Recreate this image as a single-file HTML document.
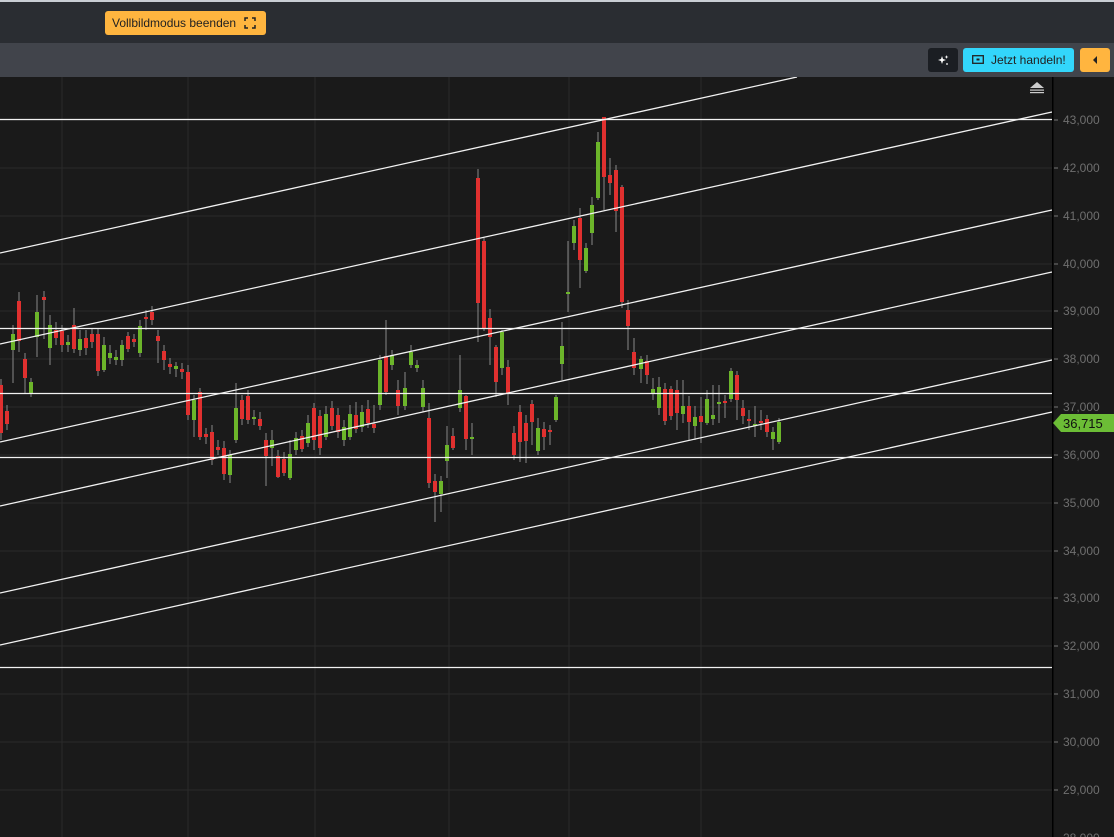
<!DOCTYPE html>
<html><head><meta charset="utf-8"><style>
html,body{margin:0;padding:0;background:#1a1a1a;width:1114px;height:837px;overflow:hidden;font-family:"Liberation Sans",sans-serif}
.top{position:absolute;left:0;top:0;width:1114px;height:43px;background:#2a2d32;border-top:2px solid #c9ced4;box-sizing:border-box}
.bar2{position:absolute;left:0;top:43px;width:1114px;height:34px;background:#41444b}
.btn{position:absolute;border-radius:3px;box-sizing:border-box;font-size:12px;color:#222;line-height:24px}
svg{position:absolute;left:0;top:77px}
.r{fill:#e0302f}.g{fill:#6cb52a}
</style></head><body>
<div class="top"></div>
<div class="btn" style="left:105px;top:11px;width:161px;height:24px;background:#ffb53f;padding:0 0 0 7px">Vollbildmodus beenden
<svg style="position:absolute;left:139px;top:6px" width="12" height="12" viewBox="0 0 12 12"><path d="M1 4V1H4M8 1H11V4M11 8V11H8M4 11H1V8" fill="none" stroke="#222" stroke-width="1.5"/></svg></div>
<div class="bar2"></div>
<div class="btn" style="left:928px;top:48px;width:30px;height:24px;background:#1b1e23">
<svg style="position:absolute;left:9px;top:6px" width="12" height="12" viewBox="0 0 12 12"><path d="M5 2L6 5L9 6L6 7L5 10L4 7L1 6L4 5Z" fill="#fff"/><path d="M9.5 1L10 2.5L11.5 3L10 3.5L9.5 5L9 3.5L7.5 3L9 2.5Z" fill="#fff"/><circle cx="10" cy="10" r="0.9" fill="#fff"/></svg></div>
<div class="btn" style="left:963px;top:48px;width:111px;height:24px;background:#33d6fb;padding:0 0 0 28px">Jetzt handeln!
<svg style="position:absolute;left:9px;top:7px" width="12" height="9" viewBox="0 0 12 9"><rect x="0.7" y="0.7" width="10.6" height="7.6" fill="none" stroke="#222" stroke-width="1.3"/><rect x="4.5" y="3.5" width="3" height="2" fill="#222"/></svg></div>
<div class="btn" style="left:1080px;top:48px;width:30px;height:24px;background:#ffb53f"><div style="position:absolute;left:13px;top:8px;width:0;height:0;border-top:4px solid transparent;border-bottom:4px solid transparent;border-right:4px solid #222"></div></div>

<svg width="1114" height="760" viewBox="0 77 1114 760">
<g stroke="#2a2a2a" stroke-width="1">
<path d="M62 77V837M188 77V837M315 77V837M449 77V837M569 77V837M701 77V837"/>
<path d="M0 120H1052M0 168H1052M0 216H1052M0 264H1052M0 311H1052M0 359H1052M0 407H1052M0 455H1052M0 503H1052M0 551H1052M0 598H1052M0 646H1052M0 694H1052M0 742H1052M0 790H1052"/>
</g>
<g stroke="#888" stroke-width="1" fill="none">
<path d="M1 379V440M7 405V430M13 325V383M19 292V352M25 353V393M31 378V397M37 295V357M44 291V339M50 315V365M56 322V345M62 325V352M68 335V352M74 308V353M80 330V356M86 330V355M92 328V348M98 328V376M104 337V372M110 345V364M116 350V365M122 340V366M128 332V352M134 334V347M140 320V357M146 310V330M152 306V325M158 330V363M164 345V370M170 358V374M176 362V377M182 363V379M188 365V420M194 395V437M200 388V440M206 428V444M212 425V465M218 440V455M224 441V480M230 450V483M236 383V443M242 395V425M248 390V424M254 410V425M260 412V430M266 433V486M272 430V466M278 450V478M284 452V476M290 440V480M296 432V455M302 430V452M308 415V447M314 403V450M320 410V455M326 406V440M332 401V430M338 408V438M344 420V446M350 405V440M356 402V433M362 405V432M368 400V428M374 405V433M380 355V410M386 320V395M392 350V370M398 380V415M405 372V410M411 345V368M417 360V372M423 380V412M429 403V488M435 474V522M441 476V512M447 426V478M453 428V450M460 355V412M466 395V450M472 423V455M478 169V342M484 238V331M490 309V365M496 345V397M502 330V375M508 360V405M514 426V460M520 405V462M526 415V463M532 400V445M538 418V455M544 422V450M550 425V445M556 395V422M562 322V380M568 241V312M574 220V250M580 208V288M586 243V273M592 197V245M598 132V200M604 117V210M610 158V195M616 165V232M622 185V308M628 300V350M634 338V375M641 356V383M647 355V384M653 378V400M659 377V415M665 383V425M671 386V420M677 380V430M683 380V423M689 396V440M695 406V440M701 397V443M707 390V425M713 385V425M719 385V423M725 395V418M731 368V402M737 371V420M743 400V424M749 410V430M755 406V437M761 410V430M767 415V437M773 427V450M779 418V444"/>
</g>
<g>
<rect class="r" x="-1" y="385" width="4" height="48"/><rect class="r" x="5" y="411" width="4" height="13"/><rect class="g" x="11" y="334" width="4" height="16"/><rect class="r" x="17" y="301" width="4" height="40"/><rect class="r" x="23" y="359" width="4" height="19"/><rect class="g" x="29" y="382" width="4" height="11"/><rect class="g" x="35" y="312" width="4" height="25"/><rect class="r" x="42" y="297" width="4" height="3"/><rect class="g" x="48" y="325" width="4" height="23"/><rect class="r" x="54" y="330" width="4" height="8"/><rect class="r" x="60" y="331" width="4" height="14"/><rect class="g" x="66" y="342" width="4" height="3"/><rect class="r" x="72" y="325" width="4" height="24"/><rect class="g" x="78" y="339" width="4" height="11"/><rect class="r" x="84" y="338" width="4" height="10"/><rect class="r" x="90" y="334" width="4" height="8"/><rect class="r" x="96" y="334" width="4" height="37"/><rect class="g" x="102" y="345" width="4" height="25"/><rect class="g" x="108" y="353" width="4" height="5"/><rect class="g" x="114" y="357" width="4" height="3"/><rect class="g" x="120" y="345" width="4" height="15"/><rect class="r" x="126" y="336" width="4" height="13"/><rect class="r" x="132" y="339" width="4" height="3"/><rect class="g" x="138" y="326" width="4" height="27"/><rect class="r" x="144" y="317" width="4" height="2"/><rect class="r" x="150" y="312" width="4" height="8"/><rect class="r" x="156" y="336" width="4" height="5"/><rect class="r" x="162" y="351" width="4" height="9"/><rect class="r" x="168" y="364" width="4" height="3"/><rect class="g" x="174" y="366" width="4" height="3"/><rect class="r" x="180" y="369" width="4" height="3"/><rect class="r" x="186" y="372" width="4" height="43"/><rect class="g" x="192" y="400" width="4" height="20"/><rect class="r" x="198" y="392" width="4" height="45"/><rect class="r" x="204" y="434" width="4" height="3"/><rect class="r" x="210" y="432" width="4" height="28"/><rect class="r" x="216" y="447" width="4" height="3"/><rect class="r" x="222" y="448" width="4" height="26"/><rect class="g" x="228" y="455" width="4" height="20"/><rect class="g" x="234" y="408" width="4" height="32"/><rect class="r" x="240" y="400" width="4" height="19"/><rect class="r" x="246" y="396" width="4" height="24"/><rect class="g" x="252" y="417" width="4" height="2"/><rect class="r" x="258" y="419" width="4" height="7"/><rect class="r" x="264" y="440" width="4" height="16"/><rect class="g" x="270" y="440" width="4" height="8"/><rect class="r" x="276" y="456" width="4" height="21"/><rect class="r" x="282" y="459" width="4" height="14"/><rect class="g" x="288" y="454" width="4" height="24"/><rect class="g" x="294" y="438" width="4" height="12"/><rect class="r" x="300" y="436" width="4" height="13"/><rect class="g" x="306" y="423" width="4" height="20"/><rect class="r" x="312" y="408" width="4" height="32"/><rect class="r" x="318" y="416" width="4" height="32"/><rect class="g" x="324" y="414" width="4" height="23"/><rect class="r" x="330" y="408" width="4" height="18"/><rect class="r" x="336" y="415" width="4" height="17"/><rect class="g" x="342" y="427" width="4" height="13"/><rect class="g" x="348" y="414" width="4" height="23"/><rect class="r" x="354" y="415" width="4" height="14"/><rect class="g" x="360" y="412" width="4" height="15"/><rect class="r" x="366" y="409" width="4" height="14"/><rect class="r" x="372" y="424" width="4" height="4"/><rect class="g" x="378" y="360" width="4" height="45"/><rect class="r" x="384" y="356" width="4" height="36"/><rect class="g" x="390" y="355" width="4" height="10"/><rect class="r" x="396" y="390" width="4" height="16"/><rect class="g" x="403" y="388" width="4" height="18"/><rect class="g" x="409" y="352" width="4" height="13"/><rect class="g" x="415" y="365" width="4" height="3"/><rect class="g" x="421" y="388" width="4" height="19"/><rect class="r" x="427" y="418" width="4" height="65"/><rect class="r" x="433" y="481" width="4" height="11"/><rect class="g" x="439" y="481" width="4" height="13"/><rect class="g" x="445" y="445" width="4" height="16"/><rect class="r" x="451" y="436" width="4" height="12"/><rect class="g" x="458" y="390" width="4" height="18"/><rect class="r" x="464" y="396" width="4" height="43"/><rect class="g" x="470" y="437" width="4" height="2"/><rect class="r" x="476" y="178" width="4" height="125"/><rect class="r" x="482" y="241" width="4" height="87"/><rect class="r" x="488" y="318" width="4" height="19"/><rect class="r" x="494" y="347" width="4" height="35"/><rect class="g" x="500" y="332" width="4" height="36"/><rect class="r" x="506" y="367" width="4" height="26"/><rect class="r" x="512" y="433" width="4" height="22"/><rect class="r" x="518" y="412" width="4" height="30"/><rect class="r" x="524" y="423" width="4" height="18"/><rect class="r" x="530" y="404" width="4" height="18"/><rect class="g" x="536" y="428" width="4" height="23"/><rect class="r" x="542" y="429" width="4" height="8"/><rect class="r" x="548" y="430" width="4" height="2"/><rect class="g" x="554" y="397" width="4" height="23"/><rect class="g" x="560" y="346" width="4" height="18"/><rect class="g" x="566" y="292" width="4" height="2"/><rect class="g" x="572" y="226" width="4" height="17"/><rect class="r" x="578" y="218" width="4" height="42"/><rect class="g" x="584" y="248" width="4" height="23"/><rect class="g" x="590" y="205" width="4" height="28"/><rect class="g" x="596" y="142" width="4" height="56"/><rect class="r" x="602" y="117" width="4" height="60"/><rect class="r" x="608" y="175" width="4" height="8"/><rect class="r" x="614" y="170" width="4" height="41"/><rect class="r" x="620" y="187" width="4" height="115"/><rect class="r" x="626" y="310" width="4" height="16"/><rect class="r" x="632" y="352" width="4" height="16"/><rect class="g" x="639" y="359" width="4" height="10"/><rect class="r" x="645" y="361" width="4" height="14"/><rect class="g" x="651" y="389" width="4" height="5"/><rect class="g" x="657" y="387" width="4" height="21"/><rect class="r" x="663" y="389" width="4" height="32"/><rect class="r" x="669" y="389" width="4" height="27"/><rect class="r" x="675" y="390" width="4" height="23"/><rect class="g" x="681" y="406" width="4" height="8"/><rect class="r" x="687" y="406" width="4" height="16"/><rect class="g" x="693" y="417" width="4" height="9"/><rect class="r" x="699" y="416" width="4" height="6"/><rect class="g" x="705" y="399" width="4" height="24"/><rect class="g" x="711" y="415" width="4" height="4"/><rect class="g" x="717" y="402" width="4" height="2"/><rect class="r" x="723" y="401" width="4" height="2"/><rect class="g" x="729" y="371" width="4" height="28"/><rect class="r" x="735" y="375" width="4" height="25"/><rect class="r" x="741" y="408" width="4" height="8"/><rect class="r" x="747" y="419" width="4" height="2"/><rect class="g" x="753" y="424" width="4" height="2"/><rect class="r" x="759" y="421" width="4" height="2"/><rect class="r" x="765" y="419" width="4" height="13"/><rect class="g" x="771" y="432" width="4" height="7"/><rect class="g" x="777" y="422" width="4" height="20"/>
</g>
<g stroke="#f2f2f2" stroke-width="1.3" fill="none">
<path d="M0 253L797 77M0 344L1052 112M0 442L1052 210M0 506L1052 272M0 593L1052 360M0 645L1052 412"/>
<path d="M0 119.5H1052M0 328.5H1052M0 393.5H1052M0 457.5H1052M0 667.5H1052"/>
</g>
<rect x="1052" y="77" width="1.5" height="760" fill="#000"/>
<g stroke="#777"><path d="M1054 120H1058M1054 168H1058M1054 216H1058M1054 264H1058M1054 311H1058M1054 359H1058M1054 407H1058M1054 455H1058M1054 503H1058M1054 551H1058M1054 598H1058M1054 646H1058M1054 694H1058M1054 742H1058M1054 790H1058"/></g>
<g fill="#6f6f6f" font-size="12" font-family="Liberation Sans, sans-serif">
<text x="1063" y="124">43,000</text><text x="1063" y="172">42,000</text><text x="1063" y="220">41,000</text><text x="1063" y="268">40,000</text><text x="1063" y="315">39,000</text><text x="1063" y="363">38,000</text><text x="1063" y="411">37,000</text><text x="1063" y="459">36,000</text><text x="1063" y="507">35,000</text><text x="1063" y="555">34,000</text><text x="1063" y="602">33,000</text><text x="1063" y="650">32,000</text><text x="1063" y="698">31,000</text><text x="1063" y="746">30,000</text><text x="1063" y="794">29,000</text><text x="1063" y="842">28,000</text>
</g>
<path d="M1053 423L1061 414H1114V432H1061Z" fill="#6cbd36"/>
<text x="1063" y="428" font-size="13" fill="#111" font-family="Liberation Sans, sans-serif">36,715</text>
<path d="M1030 88L1037 82L1044 88Z" fill="#ccc"/><rect x="1030" y="89.5" width="14" height="1.2" fill="#ccc"/><rect x="1030" y="92" width="14" height="1.2" fill="#ccc"/>
</svg>
</body></html>
